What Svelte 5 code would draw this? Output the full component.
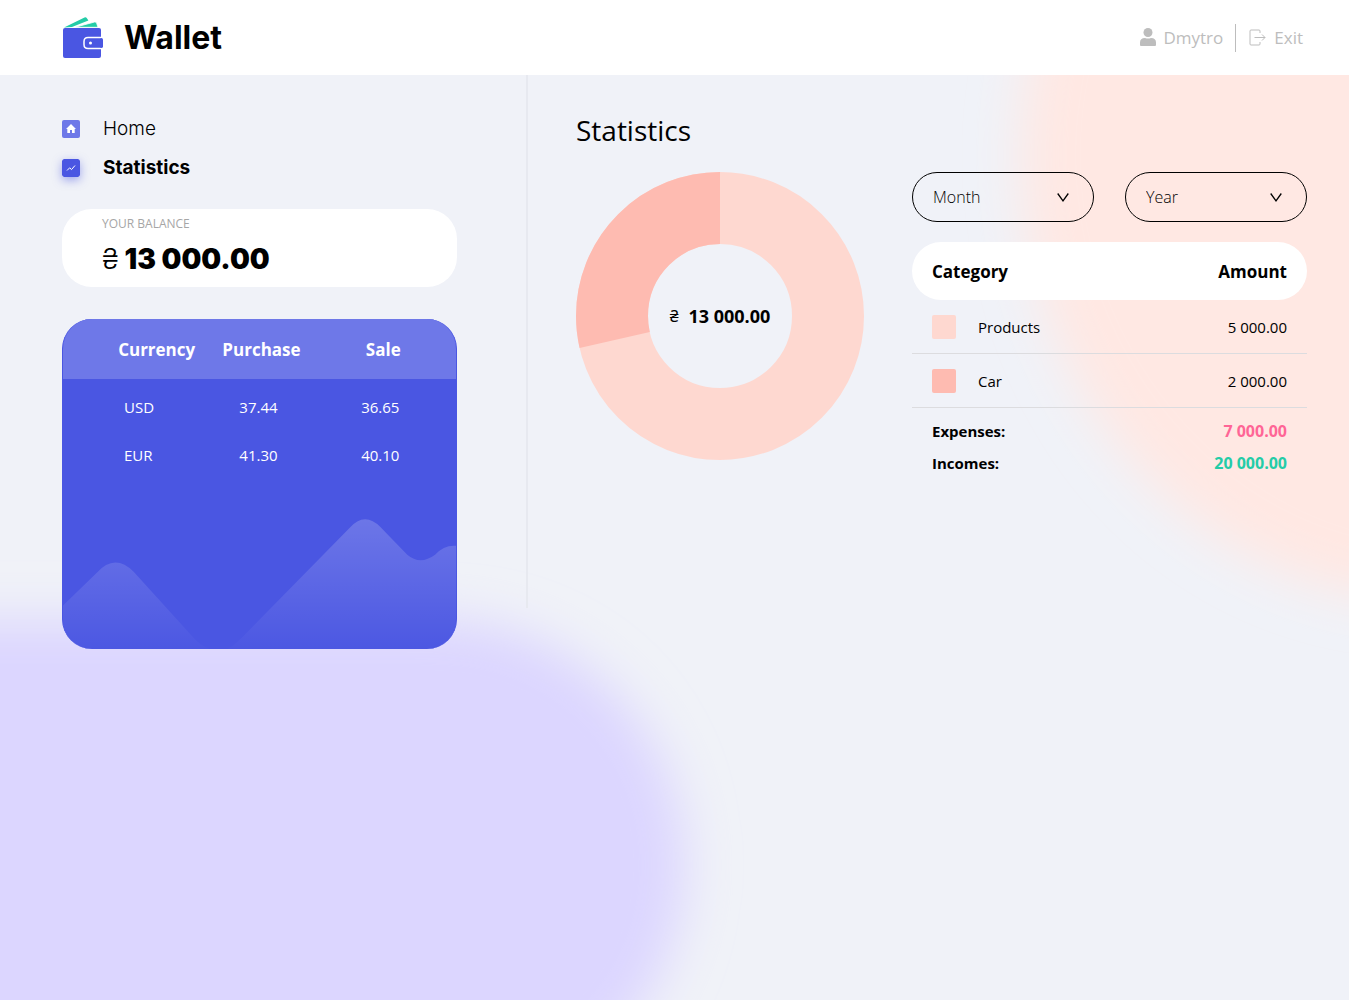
<script>
  const links = [
    { name: 'Home', active: false },
    { name: 'Statistics', active: true },
  ];
  const rates = [
    { code: 'USD', buy: '37.44', sell: '36.65' },
    { code: 'EUR', buy: '41.30', sell: '40.10' },
  ];
  const categories = [
    { name: 'Products', amount: '5 000.00', value: 5000, color: '#fed8d0' },
    { name: 'Car', amount: '2 000.00', value: 2000, color: '#febbb1' },
  ];
  const total = categories.reduce((sum, c) => sum + c.value, 0);
  const share = (categories[0].value / total) * 100;
</script>

<div class="page">
  <svg class="blobs" aria-hidden="true">
    <defs>
      <filter id="soft" x="-30%" y="-30%" width="160%" height="160%">
        <feGaussianBlur stdDeviation="25" />
      </filter>
    </defs>
    <svg x="100%" y="0" width="1" height="1" overflow="visible">
      <ellipse cx="80" cy="155" rx="408" ry="446" fill="#ffe8e3" filter="url(#soft)" />
    </svg>
    <svg x="0" y="100%" width="1" height="1" overflow="visible">
      <rect x="-300" y="-380" width="985" height="490" rx="245" fill="#dcd6ff" filter="url(#soft)" />
    </svg>
  </svg>

  <header>
    <a class="logo" href="#home">
      <svg width="42" height="42" viewBox="0 0 42 42" aria-hidden="true">
        <path d="M2 10.500 22.500.500q1.500-.6 2.400.8l1.500 2.200L10 10z" fill="#24cca7" />
        <path d="M13 10.300 32.500 5q1.600-.4 2.100 1.100L36 10.300z" fill="#24cca7" stroke="#fff" stroke-width=".8" />
        <rect x="1" y="11" width="38" height="30" rx="2" fill="#4a56e2" />
        <path d="M41 20.500H26q-4 0-4 4v3q0 4 4 4h15z" fill="#4a56e2" stroke="#fff" stroke-width="1.500" />
        <rect x="38" y="21.200" width="3" height="9.600" rx="1.500" fill="#4a56e2" />
        <circle cx="28.500" cy="26" r="1.500" fill="#fff" />
      </svg>
      <span>Wallet</span>
    </a>
    <div class="user">
      <svg width="16" height="20" viewBox="0 0 16 20" aria-hidden="true">
        <circle cx="8" cy="4.500" r="4.500" fill="#bdbdbd" />
        <path d="M0 17v-2.500q0-4.500 5-4.500 3 1.200 6 0 5 0 5 4.500V17q0 1-1 1H1q-1 0-1-1z" fill="#bdbdbd" />
      </svg>
      <span class="name">Dmytro</span>
      <button class="exit">
        <svg width="18" height="18" viewBox="0 0 18 18" fill="none" stroke="#bdbdbd" aria-hidden="true">
          <path d="M11 4V2q0-1-1-1H2Q1 1 1 2v13q0 1 1 1h8q1 0 1-1v-2M5.500 8.500H16M13 5.500l3 3-3 3" />
        </svg>
        Exit
      </button>
    </div>
  </header>

  <div class="body">
    <aside>
      <nav>
        {#each links as link}
          <a href="#{link.name.toLowerCase()}" class:active={link.active}>
            <svg width="18" height="18" viewBox="0 0 18 18" aria-hidden="true">
              <rect width="18" height="18" rx="2" fill={link.active ? '#4a56e2' : '#6e78e8'} />
              {#if link.active}
                <path d="m5 11.500 2.700-2.700 1.800 1.800L13 6.500" fill="none" stroke="#fff" />
              {:else}
                <path d="M9 4 4 9h1.300v4h2.700v-3h2v3h2.700V9H14z" fill="#fff" />
              {/if}
            </svg>
            {link.name}
          </a>
        {/each}
      </nav>

      <section class="balance">
        <p>YOUR BALANCE</p>
        <div><span class="hryvnia">₴</span><strong>13 000.00</strong></div>
      </section>

      <section class="rates">
        <table>
          <thead>
            <tr><th>Currency</th><th>Purchase</th><th>Sale</th></tr>
          </thead>
          <tbody>
            {#each rates as r}
              <tr><td>{r.code}</td><td>{r.buy}</td><td>{r.sell}</td></tr>
            {/each}
          </tbody>
        </table>
        <svg viewBox="0 0 395 132" aria-hidden="true">
          <defs>
            <linearGradient id="hill" x1="0" y1="0" x2="0" y2="1">
              <stop offset="0" stop-color="#fff" stop-opacity=".19" />
              <stop offset="1" stop-color="#fff" stop-opacity="0.010" />
            </linearGradient>
          </defs>
          <path d="M0 88 34 55Q52 35 71 54L131 120Q137 127 148 132H164Q170 130 181 119L288 10Q303-7 319 9L346 37Q359 48 374 37 383 27 395 28V132H0z" fill="url(#hill)" />
        </svg>
      </section>
    </aside>

    <main>
      <h1>Statistics</h1>
      <div class="content">
        <div class="chart">
          <svg viewBox="0 0 288 288" role="img" aria-label="Expenses by category">
            <g fill="none" stroke-width="72" transform="rotate(-90 144 144)">
              <circle cx="144" cy="144" r="108" stroke={categories[0].color} />
              <circle
                cx="144"
                cy="144"
                r="108"
                pathLength="100"
                stroke={categories[1].color}
                stroke-dasharray="{100 - share} {share}"
                stroke-dashoffset={-share}
              />
            </g>
          </svg>
          <div class="sum"><span>₴</span><strong>13 000.00</strong></div>
        </div>

        <div class="details">
          <div class="filters">
            {#each ['Month', 'Year'] as label}
              <div class="select">
                <select aria-label={label}><option>{label}</option></select>
                <svg width="12" height="9" viewBox="0 0 12 9" fill="none" stroke="#000" aria-hidden="true">
                  <path d="m.7.500 5.300 7.300 5.300-7.300" stroke-width="1.300" />
                </svg>
              </div>
            {/each}
          </div>
          <table>
            <thead>
              <tr><th colspan="2">Category</th><th class="amount">Amount</th></tr>
            </thead>
            <tbody>
              {#each categories as c}
                <tr>
                  <td class="mark">
                    <svg width="24" height="24" aria-hidden="true"><rect width="24" height="24" rx="2" fill={c.color} /></svg>
                  </td>
                  <td>{c.name}</td>
                  <td class="amount">{c.amount}</td>
                </tr>
              {/each}
            </tbody>
          </table>
          <dl>
            <div><dt>Expenses:</dt><dd class="out">7 000.00</dd></div>
            <div><dt>Incomes:</dt><dd class="in">20 000.00</dd></div>
          </dl>
        </div>
      </div>
    </main>
  </div>
</div>

<style>
  :global(body) {
    background: #f0f2f8;
  }
  .page {
    position: relative;
    box-sizing: border-box;
    min-height: 100vh;
    overflow: hidden;
    color: #000;
    font-family: 'Open Sans', 'Noto Sans', sans-serif;
    font-size: 15px;
  }
  .blobs {
    position: absolute;
    inset: 0;
    width: 100%;
    height: 100%;
  }
  header {
    position: relative;
    display: flex;
    align-items: center;
    justify-content: space-between;
    height: 75px;
    padding: 0 46px 0 62px;
    background: #fff;
  }
  .logo {
    display: flex;
    align-items: center;
    gap: 20px;
    color: #000;
    font: 700 32px/40px Inter, sans-serif;
    text-decoration: none;
  }
  .user {
    display: flex;
    align-items: center;
    color: #bdbdbd;
    font-size: 17px;
  }
  .name {
    padding: 0 12px 0 7px;
  }
  .exit {
    display: flex;
    align-items: center;
    gap: 7px;
    height: 28px;
    padding: 0 0 0 13px;
    border: 0;
    border-left: 1px solid #bdbdbd;
    background: none;
    color: inherit;
    font: inherit;
  }
  .body {
    position: relative;
    display: flex;
    align-items: flex-start;
  }
  aside {
    flex: none;
    box-sizing: border-box;
    width: 528px;
    padding: 42px 71px 0 62px;
    background: linear-gradient(#e7e9f0, #e7e9f0) right top / 2px 533px no-repeat;
  }
  nav {
    display: flex;
    flex-direction: column;
    gap: 15px;
  }
  nav a {
    display: flex;
    align-items: center;
    gap: 23px;
    color: #000;
    font: 300 19px/24px Inter, sans-serif;
    text-decoration: none;
  }
  nav a.active {
    font-weight: 700;
  }
  nav a.active svg {
    border-radius: 2px;
    box-shadow: 0 3px 10px rgba(74, 86, 226, 0.5);
  }
  .balance {
    margin-top: 29px;
    padding: 6px 40px 8px;
    border-radius: 30px;
    background: #fff;
  }
  .balance p {
    margin: 0;
    color: #a6a6a6;
    font-size: 12px;
    line-height: 18px;
  }
  .balance div {
    display: flex;
    align-items: center;
    gap: 6px;
    margin-top: 6px;
    font: 700 28px/40px Inter, sans-serif;
  }
  .hryvnia {
    font-weight: 300;
  }
  .rates {
    margin-top: 32px;
    border: solid #4a56e2;
    border-width: 0 1px;
    border-radius: 30px;
    overflow: hidden;
    background: #4a56e2;
    color: #fff;
  }
  .rates svg {
    display: block;
    width: 100%;
    margin-top: 39px;
  }
  table {
    width: 100%;
    border-collapse: collapse;
  }
  .rates table {
    table-layout: fixed;
  }
  .rates th {
    height: 60px;
    padding: 0;
    background: #6e78e8;
    font-size: 17px;
    text-align: center;
  }
  .rates th:first-child {
    width: 38%;
    box-sizing: border-box;
    padding-left: 38px;
  }
  .rates th:nth-child(2) {
    width: 25%;
  }
  .rates td {
    height: 48px;
    padding: 0 6px 0 0;
    text-align: center;
  }
  .rates td:first-child {
    padding-left: 61px;
    text-align: left;
  }
  .rates tbody tr:first-child td {
    padding-top: 4px;
  }
  main {
    flex: 1;
    min-width: 0;
    padding: 35px 42px 0 48px;
  }
  h1 {
    margin: 0;
    font-weight: 400;
    font-size: 28px;
    line-height: 40px;
  }
  .content {
    display: flex;
    align-items: flex-start;
    gap: 48px;
    margin-top: 22px;
  }
  .chart {
    position: relative;
    flex: 0 1 288px;
  }
  .chart svg {
    display: block;
    width: 100%;
  }
  .sum {
    position: absolute;
    inset: 0;
    display: flex;
    align-items: center;
    justify-content: center;
    gap: 10px;
    font-size: 18px;
  }
  .sum span {
    font-size: 16px;
  }
  .details {
    flex: 1;
    min-width: 0;
  }
  .filters {
    display: grid;
    grid-template-columns: 1fr 1fr;
    gap: 31px;
    margin-bottom: 20px;
  }
  .select {
    position: relative;
  }
  select {
    display: block;
    width: 100%;
    height: 50px;
    padding: 0 20px;
    border: 1px solid #000;
    border-radius: 30px;
    background: none;
    color: #000;
    font: inherit;
    font-weight: 300;
    font-size: 16px;
    appearance: none;
  }
  .select svg {
    position: absolute;
    top: 21px;
    right: 25px;
    pointer-events: none;
  }
  .details th {
    height: 58px;
    padding: 0 20px;
    background: #fff;
    font-size: 17px;
    text-align: left;
  }
  .details th:first-child {
    border-radius: 30px 0 0 30px;
  }
  .details th:last-child {
    border-radius: 0 30px 30px 0;
  }
  .details td {
    height: 53px;
    padding: 0;
    border-bottom: 1px solid #dcdcdf;
  }
  .details td.mark {
    width: 46px;
    padding-left: 20px;
  }
  .mark svg {
    display: block;
  }
  .details .amount {
    padding-right: 20px;
    text-align: right;
  }
  dl {
    margin: 7px 20px 0;
    font-weight: 700;
    line-height: 32px;
  }
  dl div {
    display: flex;
    justify-content: space-between;
  }
  dd {
    margin: 0;
    font-size: 16px;
  }
  .out {
    color: #ff6596;
  }
  .in {
    color: #24cca7;
  }
</style>
